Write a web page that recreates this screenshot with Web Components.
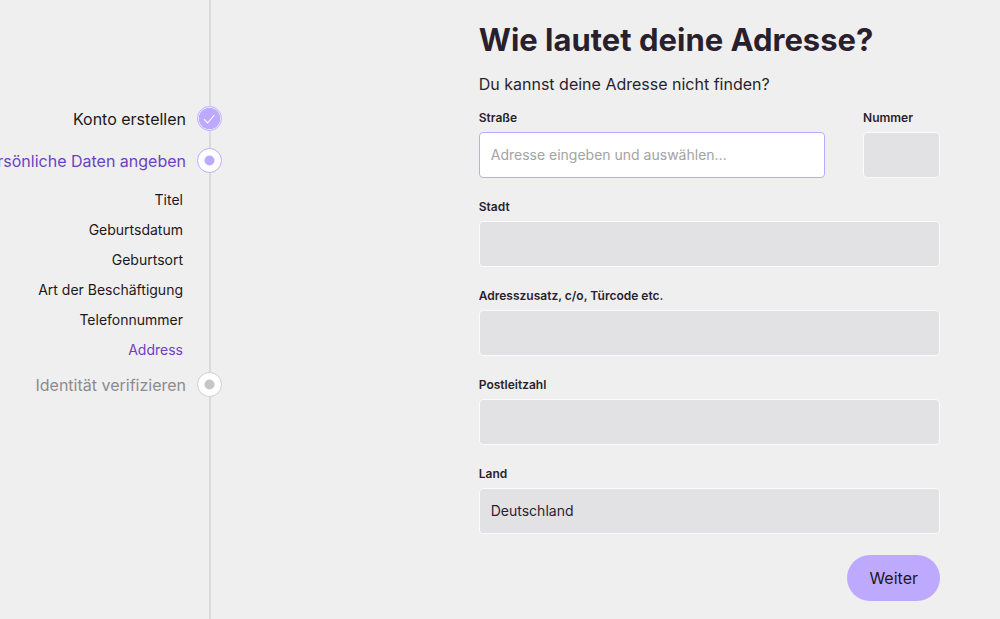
<!DOCTYPE html>
<html lang="de">
<head>
<meta charset="utf-8">
<meta name="viewport" content="width=device-width, initial-scale=1">
<title>Wie lautet deine Adresse?</title>
<style>
  body {
    margin: 0;
    background: #efefef;
    color: #2a1f2d;
    font-family: Inter, "Liberation Sans", sans-serif;
    font-size: 16px;
    line-height: 24px;
    overflow-x: hidden;
  }
</style>
</head>
<body>
<signup-page>
  <step-list slot="steps">
    <step-item state="done">Konto erstellen</step-item>
    <step-item state="current">Persönliche Daten angeben
      <sub-step slot="sub">Titel</sub-step>
      <sub-step slot="sub">Geburtsdatum</sub-step>
      <sub-step slot="sub">Geburtsort</sub-step>
      <sub-step slot="sub">Art der Beschäftigung</sub-step>
      <sub-step slot="sub">Telefonnummer</sub-step>
      <sub-step slot="sub" active>Address</sub-step>
    </step-item>
    <step-item state="pending">Identität verifizieren</step-item>
  </step-list>
  <address-form></address-form>
</signup-page>

<script>
class BaseElement extends HTMLElement {
  constructor() {
    super();
    this.attachShadow({ mode: 'open' }).innerHTML =
      '<style>*{box-sizing:border-box}</style>' + this.render();
  }
}

customElements.define('signup-page', class extends BaseElement {
  render() {
    return `
      <style>
        :host { display: grid; grid-template-columns: 222px minmax(0, 1fr); min-height: 100vh; }
        main { padding: 20px 60px 16px 33%; }
      </style>
      <slot name="steps"></slot>
      <main><slot></slot></main>`;
  }
});

customElements.define('step-list', class extends BaseElement {
  render() {
    return `
      <style>
        :host {
          display: block;
          padding-top: 106px;
          background: linear-gradient(#dbdbdb, #dbdbdb) right 11px top / 2px 100% no-repeat;
        }
        nav { display: flex; flex-direction: column; }
      </style>
      <nav aria-label="Fortschritt"><slot></slot></nav>`;
  }
});

customElements.define('step-item', class extends BaseElement {
  render() {
    return `
      <style>
        :host { display: block; color: #1d1720; --ring: #bdaaff; --dot: #bdaaff; }
        :host([state="done"]) { margin-bottom: 17px; }
        :host([state="current"]) { color: #6c42c1; }
        :host([state="pending"]) { color: #8d8a8f; --ring: #cfcfcf; --dot: #c6c6c8; }
        .row { display: flex; justify-content: flex-end; align-items: center; gap: 11px; white-space: nowrap; }
        .mark { flex: none; width: 25px; height: 25px; display: block; }
        .ring { fill: #fff; stroke: var(--ring); }
        .dot { fill: var(--dot); }
        .disc, .tick { display: none; }
        :host([state="done"]) .dot { display: none; }
        :host([state="done"]) .disc { display: block; fill: #bdaaff; }
        :host([state="done"]) .tick { display: block; fill: none; stroke: #fff; stroke-width: 1.1; }
        .subs { display: none; }
        :host([state="current"]) .subs { display: flex; flex-direction: column; gap: 10px; padding: 17px 39px 12px 0; }
      </style>
      <div class="row">
        <span><slot></slot></span>
        <svg class="mark" viewBox="0 0 25 25" aria-hidden="true">
          <circle class="ring" cx="12.5" cy="12.5" r="12"/>
          <circle class="disc" cx="12.5" cy="12.5" r="10.8"/>
          <circle class="dot" cx="12.5" cy="12.5" r="5"/>
          <path class="tick" d="M7 13.2 L10.6 17 L17.4 9"/>
        </svg>
      </div>
      <div class="subs"><slot name="sub"></slot></div>`;
  }
});

customElements.define('sub-step', class extends BaseElement {
  render() {
    return `
      <style>
        :host { display: block; text-align: right; font-size: 14px; line-height: 20px; color: #1d1720; white-space: nowrap; }
        :host([active]) { color: #6c42c1; }
      </style>
      <slot></slot>`;
  }
});

customElements.define('form-field', class extends HTMLElement {
  connectedCallback() {
    if (this.shadowRoot) return;
    this.attachShadow({ mode: 'open' }).innerHTML = `
      <style>
        :host { display: block; min-width: 0; }
        label { display: block; margin-bottom: 6px; font-size: 12px; font-weight: 600; line-height: 16px; }
        input {
          box-sizing: border-box; display: block; width: 100%; height: 46px; margin: 0; padding: 0 12px 2px 11px;
          border: 1px solid #bdaaff; border-radius: 4px; background: #fff;
          color: #2a1f2d; font: inherit; font-size: 14px; outline: none;
        }
        input::placeholder { color: #a3a3a3; opacity: 1; }
        input:disabled { border-color: #fbfbfb; background: #e2e2e4; }
      </style>
      <label for="field"></label>
      <input id="field" type="text">`;
    const input = this.shadowRoot.querySelector('input');
    this.shadowRoot.querySelector('label').textContent = this.getAttribute('label');
    input.placeholder = this.getAttribute('placeholder') || '';
    input.value = this.getAttribute('value') || '';
    input.disabled = this.hasAttribute('disabled');
  }
});

customElements.define('pill-button', class extends BaseElement {
  render() {
    return `
      <style>
        :host { display: block; }
        button {
          height: 46px; padding: 0 22px; border: 0; border-radius: 23px;
          background: #bdaaff; color: #1d1720; font: inherit; cursor: pointer;
        }
      </style>
      <button type="button"><slot></slot></button>`;
  }
});

customElements.define('address-form', class extends BaseElement {
  render() {
    return `
      <style>
        :host { display: block; }
        h1 { margin: 0 0 12px; font-size: 31px; font-weight: 700; line-height: 40px; }
        p { margin: 0 0 14px; }
        form { display: flex; flex-direction: column; gap: 21px; }
        .street { display: grid; grid-template-columns: minmax(0, 9fr) minmax(0, 2fr); gap: 38px; }
        pill-button { align-self: flex-end; }
      </style>
      <h1>Wie lautet deine Adresse?</h1>
      <p>Du kannst deine Adresse nicht finden?</p>
      <form>
        <div class="street">
          <form-field label="Straße" placeholder="Adresse eingeben und auswählen..."></form-field>
          <form-field label="Nummer" disabled></form-field>
        </div>
        <form-field label="Stadt" disabled></form-field>
        <form-field label="Adresszusatz, c/o, Türcode etc." disabled></form-field>
        <form-field label="Postleitzahl" disabled></form-field>
        <form-field label="Land" value="Deutschland" disabled></form-field>
        <pill-button>Weiter</pill-button>
      </form>`;
  }
});
</script>
</body>
</html>
